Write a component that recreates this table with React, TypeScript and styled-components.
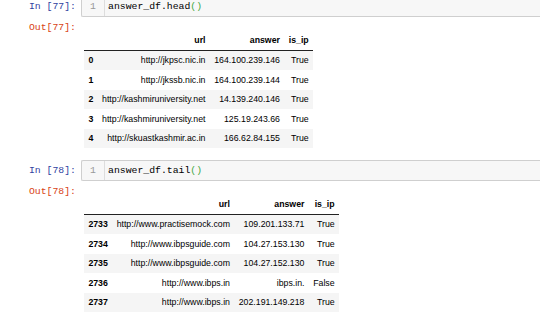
import styled, { createGlobalStyle } from "styled-components";

const GlobalStyle = createGlobalStyle`
  html, body {
    margin: 0;
    padding: 0;
    background: #ffffff;
    overflow: hidden;
  }
`;

const Notebook = styled.div`
  width: 100%;
  margin-top: -4px;
  display: flex;
  flex-direction: column;
`;

const Cell = styled.div<{ $gap?: number }>`
  display: flex;
  flex-direction: column;
  margin-top: ${(p) => p.$gap ?? 0}px;
`;

const Row = styled.div`
  display: flex;
  align-items: flex-start;
`;

const Prompt = styled.div<{ $out?: boolean }>`
  flex: 0 0 76px;
  box-sizing: border-box;
  padding-right: 5px;
  text-align: right;
  font-family: "Liberation Mono", monospace;
  font-size: 9.8px;
  line-height: 12px;
  color: ${(p) => (p.$out ? "#d84315" : "#303f9f")};
  white-space: pre;
`;

const InputPrompt = styled(Prompt)`
  padding-top: 5px;
  flex-basis: 81px;
`;

const CodeBox = styled.div`
  flex: 1;
  display: flex;
  background: #f7f7f7;
  border: 1px solid #cfcfcf;
  border-right: none;
  border-radius: 2px 0 0 2px;
  font-family: "Liberation Mono", monospace;
  font-size: 9.8px;
  line-height: 11px;
`;

const Gutter = styled.div`
  width: 23px;
  box-sizing: border-box;
  padding: 4px 8px 4px 0;
  text-align: right;
  color: #999999;
  border-right: 1px solid #dddddd;
`;

const Code = styled.div`
  padding: 4px 0 4px 3px;
  color: #000000;
`;

const Paren = styled.span`
  color: #3fa83f;
`;

const OutputRow = styled(Row)`
  padding-top: 5px;
`;

const OutPrompt = styled(Prompt)`
  flex-basis: 84px;
  padding-right: 8px;
`;

const Table = styled.table`
  margin-top: 8px;
  border-collapse: collapse;
  border-spacing: 0;
  font-family: "Liberation Sans", Arial, sans-serif;
  font-size: 8.75px;
  color: #000000;

  th,
  td {
    padding: 4.5px 4.4px;
    text-align: right;
    vertical-align: middle;
    white-space: nowrap;
    line-height: 10.5px;
  }

  thead th {
    font-weight: bold;
    border-bottom: 1px solid #222222;
    vertical-align: bottom;
  }

  tbody th {
    font-weight: bold;
    text-align: left;
  }

  tbody tr:nth-child(odd) {
    background: #f5f5f5;
  }
`;

type Rec = [string, string, string, string];

const headRows: Rec[] = [
  ["0", "http://jkpsc.nic.in", "164.100.239.146", "True"],
  ["1", "http://jkssb.nic.in", "164.100.239.144", "True"],
  ["2", "http://kashmiruniversity.net", "14.139.240.146", "True"],
  ["3", "http://kashmiruniversity.net", "125.19.243.66", "True"],
  ["4", "http://skuastkashmir.ac.in", "166.62.84.155", "True"],
];

const tailRows: Rec[] = [
  ["2733", "http://www.practisemock.com", "109.201.133.71", "True"],
  ["2734", "http://www.ibpsguide.com", "104.27.153.130", "True"],
  ["2735", "http://www.ibpsguide.com", "104.27.152.130", "True"],
  ["2736", "http://www.ibps.in", "ibps.in.", "False"],
  ["2737", "http://www.ibps.in", "202.191.149.218", "True"],
];

const Frame = ({ rows }: { rows: Rec[] }) => (
  <Table>
    <thead>
      <tr>
        <th></th>
        <th>url</th>
        <th>answer</th>
        <th>is_ip</th>
      </tr>
    </thead>
    <tbody>
      {rows.map((r) => (
        <tr key={r[0]}>
          <th>{r[0]}</th>
          <td>{r[1]}</td>
          <td>{r[2]}</td>
          <td>{r[3]}</td>
        </tr>
      ))}
    </tbody>
  </Table>
);

const NotebookCell = ({
  n,
  method,
  rows,
  gap,
}: {
  n: number;
  method: string;
  rows: Rec[];
  gap?: number;
}) => (
  <Cell $gap={gap}>
    <Row>
      <InputPrompt>{`In [${n}]:`}</InputPrompt>
      <CodeBox>
        <Gutter>1</Gutter>
        <Code>
          answer_df.{method}
          <Paren>()</Paren>
        </Code>
      </CodeBox>
    </Row>
    <OutputRow>
      <OutPrompt $out>{`Out[${n}]:`}</OutPrompt>
      <Frame rows={rows} />
    </OutputRow>
  </Cell>
);

export default function App() {
  return (
    <>
      <GlobalStyle />
      <Notebook>
        <NotebookCell n={77} method="head" rows={headRows} />
        <NotebookCell n={78} method="tail" rows={tailRows} gap={12} />
      </Notebook>
    </>
  );
}
